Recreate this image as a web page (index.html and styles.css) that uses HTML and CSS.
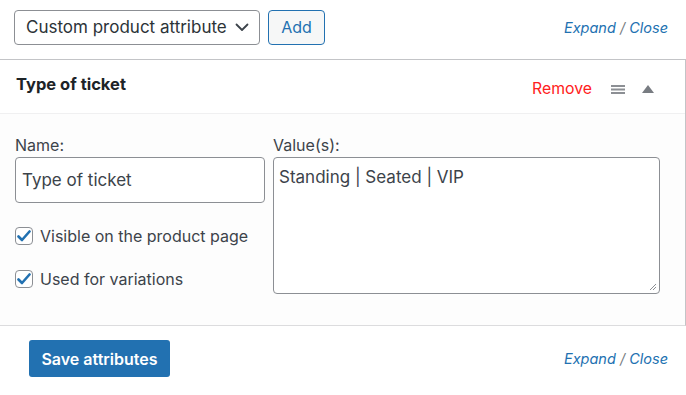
FILE: index.html
```html
<!DOCTYPE html>
<html lang="en">
<head>
  <meta charset="UTF-8">
  <title>Product attributes</title>
  <link rel="stylesheet" href="styles.css">
</head>
<body>
  <div class="toolbar">
    <div class="toolbar-left">
      <div class="select-box">
        <span>Custom product attribute</span>
        <svg class="chevron" width="14" height="9" viewBox="0 0 14 9"><path d="M1.5 1.5 L7 7 L12.5 1.5" fill="none" stroke="#3c434a" stroke-width="1.8" stroke-linecap="round" stroke-linejoin="round"/></svg>
      </div>
      <button class="btn-add">Add</button>
    </div>
    <div class="expand-links"><a href="#">Expand</a> / <a href="#">Close</a></div>
  </div>

  <div class="attribute">
    <div class="attribute-head">
      <strong class="attribute-title">Type of ticket</strong>
      <div class="attribute-actions">
        <a href="#" class="remove">Remove</a>
        <svg class="handle" width="14" height="10" viewBox="0 0 14 10"><rect x="0" y="1" width="14" height="2" fill="#8c8f94"/><rect x="0" y="4.5" width="14" height="2" fill="#8c8f94"/><rect x="0" y="8" width="14" height="2" fill="#8c8f94"/></svg>
        <svg class="toggle" width="12" height="8" viewBox="0 0 12 8"><path d="M6 0 L12 8 L0 8 Z" fill="#787c82"/></svg>
      </div>
    </div>

    <div class="attribute-body">
      <div class="col-name">
        <label class="field-label">Name:</label>
        <div class="text-input">Type of ticket</div>
        <label class="check-row">
          <span class="checkbox"><svg width="14" height="12" viewBox="0 0 14 12"><path d="M1.5 6.5 L5 10 L12.5 1.5" fill="none" stroke="#2271b1" stroke-width="2.6" stroke-linecap="round" stroke-linejoin="round"/></svg></span>
          Visible on the product page
        </label>
        <label class="check-row">
          <span class="checkbox"><svg width="14" height="12" viewBox="0 0 14 12"><path d="M1.5 6.5 L5 10 L12.5 1.5" fill="none" stroke="#2271b1" stroke-width="2.6" stroke-linecap="round" stroke-linejoin="round"/></svg></span>
          Used for variations
        </label>
      </div>
      <div class="col-values">
        <label class="field-label">Value(s):</label>
        <div class="textarea">Standing | Seated | VIP
          <svg class="grip" width="8" height="8" viewBox="0 0 8 8"><path d="M7 1 L1 7 M7 4 L4 7" stroke="#8c8f94" stroke-width="1"/></svg>
        </div>
      </div>
    </div>
  </div>

  <div class="footer">
    <button class="btn-save">Save attributes</button>
    <div class="expand-links"><a href="#">Expand</a> / <a href="#">Close</a></div>
  </div>
</body>
</html>
```

FILE: styles.css
```css
body {
    margin: 0;
    padding: 0;
    font-family: Inter, "Noto Sans", sans-serif;
    font-size: 16px;
    color: #3c434a;
    background: #fff;
}

a {
    color: #2271b1;
    text-decoration: none;
}

.toolbar {
    display: flex;
    align-items: center;
    justify-content: space-between;
    height: 59px;
    padding: 0 18px 5px 14px;
    box-sizing: border-box;
}

.toolbar-left {
    display: flex;
    align-items: center;
    gap: 8px;
}

.select-box {
    display: flex;
    align-items: center;
    justify-content: space-between;
    width: 246px;
    height: 35px;
    padding: 0 10px 0 11px;
    box-sizing: border-box;
    border: 1px solid #8c8f94;
    border-radius: 4px;
    font-size: 17px;
    color: #2c3338;
}

.btn-add {
    height: 35px;
    width: 57px;
    border: 1px solid #2271b1;
    border-radius: 4px;
    background: #f6f7f7;
    color: #2271b1;
    font-family: inherit;
    font-size: 16px;
    padding: 0;
}

.expand-links {
    font-style: italic;
    font-size: 14.5px;
    color: #787c82;
}

.attribute {
    border-top: 1px solid #c3c4c7;
    border-right: 1px solid #c3c4c7;
    border-bottom: 1px solid #dcdcde;
}

.attribute-head {
    display: flex;
    align-items: center;
    justify-content: space-between;
    height: 53px;
    padding: 0 31px 0 16px;
    border-bottom: 1px solid #f0f0f1;
    background: #fff;
}

.attribute-title {
    font-size: 16.5px;
    font-weight: 700;
    color: #1d2327;
    margin-top: -5px;
}

.attribute-actions {
    display: flex;
    align-items: center;
    margin-top: 4px;
}

.remove {
    color: #ff2020;
    font-size: 15.8px;
    margin-right: 19px;
}

.handle {
    margin-right: 17px;
}

.attribute-body {
    display: flex;
    gap: 8px;
    padding: 22px 25px 31px 15px;
    background: #fdfdfd;
}

.col-name {
    width: 250px;
}

.col-values {
    flex: 1;
}

.field-label {
    display: block;
    margin-bottom: 3px;
    line-height: 18px;
}

.text-input {
    height: 46px;
    padding: 0 6px;
    box-sizing: border-box;
    display: flex;
    align-items: center;
    border: 1px solid #8c8f94;
    border-radius: 4px;
    background: #fff;
    font-size: 17px;
}

.check-row {
    display: flex;
    align-items: center;
    gap: 7px;
    margin-top: 23px;
}

.check-row + .check-row {
    margin-top: 23px;
}

.checkbox {
    display: flex;
    align-items: center;
    justify-content: center;
    width: 18px;
    height: 18px;
    box-sizing: border-box;
    border: 1px solid #8c8f94;
    border-radius: 4px;
    background: #fff;
}

.textarea {
    position: relative;
    height: 137px;
    padding: 9px 5px;
    box-sizing: border-box;
    border: 1px solid #8c8f94;
    border-radius: 4px;
    background: #fff;
    font-size: 17px;
}

.grip {
    position: absolute;
    right: 2px;
    bottom: 2px;
}

.footer {
    display: flex;
    align-items: center;
    justify-content: space-between;
    padding: 14px 18px 0 29px;
}

.btn-save {
    height: 37px;
    width: 141px;
    border: none;
    border-radius: 3px;
    background: #2271b1;
    color: #fff;
    font-family: inherit;
    font-size: 16px;
    font-weight: 600;
    padding: 0;
}
```
